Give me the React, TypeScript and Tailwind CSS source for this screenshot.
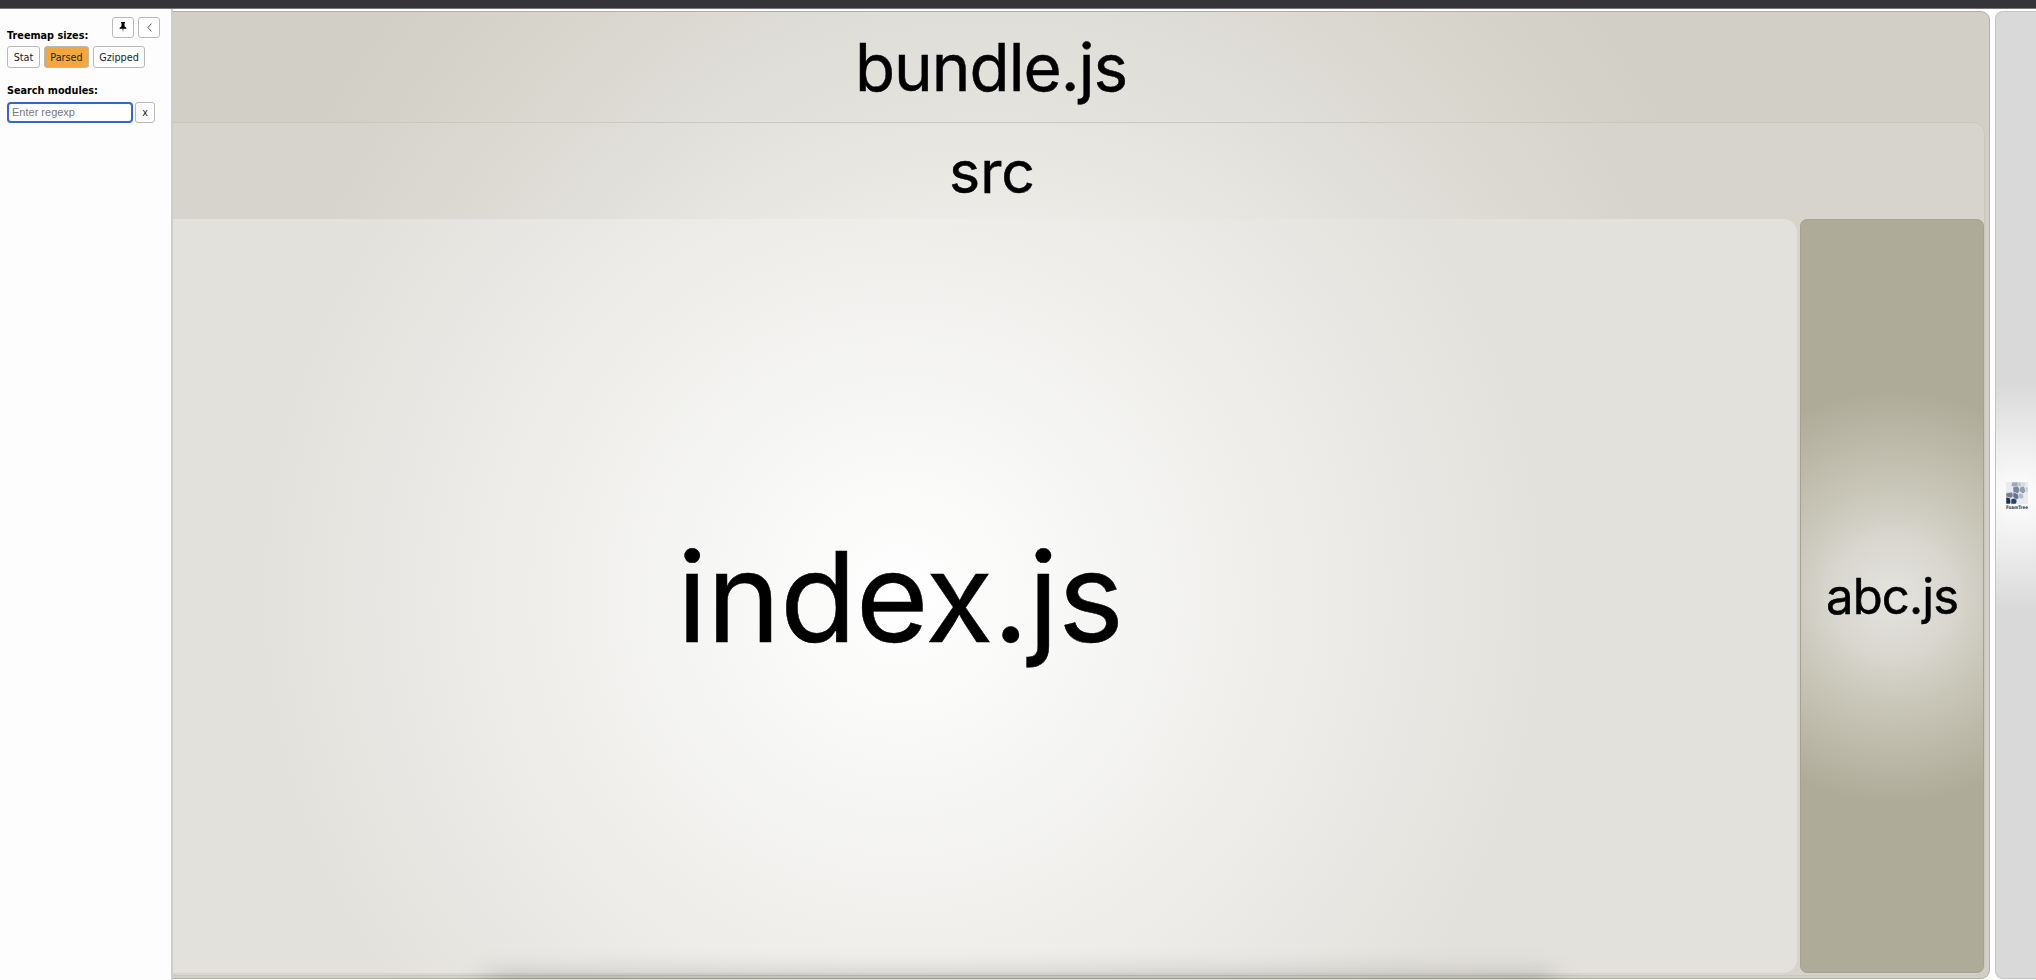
const button =
  "flex items-center justify-center rounded-[3px] border border-[#b9b9b9] text-[9.7px] leading-none text-[#222]";

function PinIcon() {
  return (
    <svg width="8" height="11" viewBox="0 0 8 11" fill="#000">
      <path d="M2 0h4v.9l-.6.6.2 3.1C6.800 5.100 7.500 5.800 7.500 6.700H4.400L4 11l-.4-4.300H.5c0-.9.7-1.600 1.900-2.100l.2-3.100L2 .9z" />
    </svg>
  );
}

function Sidebar() {
  return (
    <aside className="flex w-[173px] shrink-0 flex-col border-r-2 border-[#cdcdcd] bg-[#fdfdfd] pl-[7px] font-['DejaVu_Sans',Verdana,sans-serif]">
      <div className="flex h-[37px]">
        <div className="w-[105px] pt-[21px] text-[9.7px] leading-[12px] font-bold whitespace-nowrap text-black">Treemap sizes:</div>
        <button className={`${button} mt-[8px] h-[21px] w-[22px] bg-white`}>
          <PinIcon />
        </button>
        <button className={`${button} mt-[8px] ml-[4px] h-[21px] w-[22px] bg-white`}>
          <svg width="5" height="9" viewBox="0 0 5 9" fill="none" stroke="#555" strokeWidth="1">
            <path d="M4.400.6 1 4.500l3.400 3.900" />
          </svg>
        </button>
      </div>
      <div className="flex gap-[4px]">
        <button className={`${button} h-[22px] w-[33px] bg-white pt-px`}>Stat</button>
        <button className={`${button} h-[22px] w-[45px] bg-[#f2a83f] pt-px`}>Parsed</button>
        <button className={`${button} h-[22px] w-[52px] bg-white pt-px`}>Gzipped</button>
      </div>
      <div className="mt-[17px] text-[9.7px] leading-[12px] font-bold text-black">Search modules:</div>
      <div className="mt-[5px] flex gap-[2px]">
        <input
          className="h-[21px] w-[126px] rounded-[4px] border-2 border-[#2f66cf] bg-white px-[3px] pb-px font-['Liberation_Sans',Arial,sans-serif] text-[11px] outline-none placeholder:text-[#777]"
          placeholder="Enter regexp"
        />
        <button className={`${button} h-[21px] w-[20px] bg-white`}>x</button>
      </div>
    </aside>
  );
}

function FoamTreeLogo() {
  return (
    <svg className="mt-[3px] overflow-visible" width="25" height="30" viewBox="0 0 25 30">
      <rect width="22" height="22" fill="#e9ebee" />
      <g stroke="#f3f4f6" strokeWidth="0.5">
        <path d="M6 0h6l1 3-3 3-5-2z" fill="#9fa9b5" />
        <path d="M12 0h3l1 4-3 1-1-2z" fill="#b9c0c9" />
        <path d="M15 0h4l1 4-4 1z" fill="#d6dae0" />
        <path d="M7 5l5-1 2 4-2 4-5-2z" fill="#78869b" />
        <path d="M14 5l4-1 2 5-3 3-4-3z" fill="#909cac" />
        <path d="M19 5h3v6l-2-1z" fill="#c6ccd4" />
        <path d="M13 11l4 1 1 4-4 1-2-3z" fill="#b1b9c5" />
        <path d="M0 11l6-1 2 4-3 2-5-1z" fill="#6f7e95" />
        <path d="M7 10l5 2 1 4-3 2-3-3z" fill="#65748d" />
        <path d="M0 15l4 1 1 4-1 2H0z" fill="#1c2f57" />
        <path d="M5 17l4-1 2 3-1 3H5z" fill="#2b4069" />
      </g>
      <text x="0" y="26.500" fontSize="4.800" fontWeight="700" fill="#263a62" textLength="22" lengthAdjust="spacingAndGlyphs" fontFamily="DejaVu Sans, sans-serif">
        FoamTree
      </text>
    </svg>
  );
}

function Treemap() {
  return (
    <main className="flex min-w-0 flex-1 pt-[2px] pb-[1px] font-['Inter',sans-serif] leading-none font-normal whitespace-nowrap text-black [-webkit-text-stroke:0.5px_black]">
      <section className="flex w-[1817px] shrink-0 flex-col rounded-r-[9px] border-y border-r border-[#b5b09b] bg-[radial-gradient(circle_770px_at_820px_484px,#f0efec_0%,#e4e3df_48%,#dfded8_62%,#d9d6ce_80%,#d2cfc7_100%)] pb-[2px]">
        <h1 className="h-[110px] pt-[23px] pl-[682px] text-[65.500px] tracking-[-0.015em]">bundle.js</h1>
        <section className="mr-[4px] flex flex-1 flex-col rounded-r-[11px] border-y border-r border-[#cbc8be] bg-[radial-gradient(circle_740px_at_810px_427px,#f8f8f6_0%,#ecebe7_45%,#e6e5e0_58%,#dddbd4_80%,#d7d4cd_100%)] pb-[2px]">
          <h2 className="h-[96px] pt-[19px] pl-[776px] text-[59px]">src</h2>
          <div className="flex flex-1 gap-[3px]">
            <div className="w-[1624px] shrink-0 rounded-r-[14px] bg-[radial-gradient(circle_650px_at_730px_378px,#ffffff_0%,#e2e1dc_100%)] pt-[315px] pl-[504px] text-[125px] tracking-[-0.005em]">
              index.js
            </div>
            <div className="flex-1 rounded-[7px] border border-[#a5a18d] bg-[radial-gradient(circle_206px_at_92px_377px,#e4e3df_0%,#d8d6ce_30%,#c9c7b9_52%,#afab99_100%)] pt-[352px] pl-[25px] text-[49px] tracking-[-0.017em]">
              abc.js
            </div>
          </div>
        </section>
      </section>
      <section className="ml-[5px] flex flex-1 items-center rounded-l-[8px] border-y border-l border-[#c4c4c4] bg-[radial-gradient(circle_114px_at_22px_484px,#ffffff_0%,#d9d9d9_100%)] pl-[10px] [-webkit-text-stroke:0]">
        <FoamTreeLogo />
      </section>
    </main>
  );
}

export default function App() {
  return (
    <div className="relative flex h-[980px] w-[2036px] flex-col overflow-hidden bg-white">
      <div className="h-[9px] shrink-0 border-b border-[#77767a] bg-[#353439]" />
      <div className="flex min-h-0 flex-1">
        <Sidebar />
        <Treemap />
      </div>
      <div className="pointer-events-none absolute top-[984px] left-[490px] h-[20px] w-[1060px] shadow-[0_0_30px_4px_rgba(0,0,0,0.27)]" />
    </div>
  );
}
